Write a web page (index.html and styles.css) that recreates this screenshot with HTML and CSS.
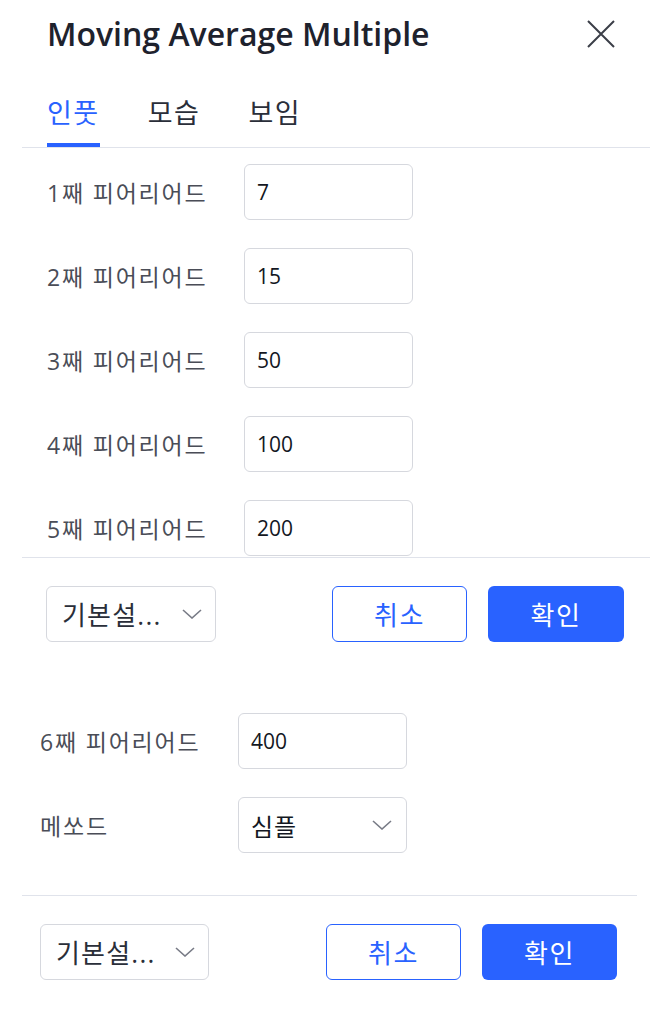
FILE: index.html
```html
<!DOCTYPE html>
<html lang="ko">
<head>
<meta charset="utf-8">
<title>Moving Average Multiple</title>
<link rel="stylesheet" href="styles.css">
</head>
<body>
<section class="panel panel-a">
  <header class="head">
    <h1 class="title">Moving Average Multiple</h1>
    <button class="close" aria-label="닫기">
      <svg width="28" height="28" viewBox="0 0 28 28"><path d="M1 1 L27 27 M27 1 L1 27" stroke="#3b3e48" stroke-width="2" fill="none"/></svg>
    </button>
  </header>
  <nav class="tabs">
    <span class="tab active">인풋</span>
    <span class="tab">모습</span>
    <span class="tab">보임</span>
  </nav>
  <div class="rows rows-a">
    <div class="row"><span class="label">1째 피어리어드</span><span class="field">7</span></div>
    <div class="row"><span class="label">2째 피어리어드</span><span class="field">15</span></div>
    <div class="row"><span class="label">3째 피어리어드</span><span class="field">50</span></div>
    <div class="row"><span class="label">4째 피어리어드</span><span class="field">100</span></div>
    <div class="row"><span class="label">5째 피어리어드</span><span class="field">200</span></div>
  </div>
  <footer class="foot">
    <span class="preset">기본설...<svg class="chev" width="20" height="10" viewBox="0 0 20 10"><path d="M1 1 L10 9 L19 1" stroke="#787b86" stroke-width="1.6" fill="none"/></svg></span>
    <span class="spacer"></span>
    <button class="btn cancel">취소</button>
    <button class="btn ok">확인</button>
  </footer>
</section>
<section class="panel panel-b">
  <div class="rows rows-b">
    <div class="row"><span class="label">6째 피어리어드</span><span class="field">400</span></div>
    <div class="row"><span class="label">메쏘드</span><span class="field select">심플<svg class="chev" width="20" height="10" viewBox="0 0 20 10"><path d="M1 1 L10 9 L19 1" stroke="#787b86" stroke-width="1.6" fill="none"/></svg></span></div>
  </div>
  <footer class="foot">
    <span class="preset">기본설...<svg class="chev" width="20" height="10" viewBox="0 0 20 10"><path d="M1 1 L10 9 L19 1" stroke="#787b86" stroke-width="1.6" fill="none"/></svg></span>
    <span class="spacer"></span>
    <button class="btn cancel">취소</button>
    <button class="btn ok">확인</button>
  </footer>
</section>
</body>
</html>
```
FILE: styles.css
```css
* { box-sizing: border-box; }
html, body { margin: 0; padding: 0; background: #ffffff; }
body {
  font-family: "Open Sans", "Noto Sans CJK KR", sans-serif;
  color: #131722;
}
.panel { margin-left: 22px; }
.panel-a { width: 628px; }
.panel-b { width: 615px; }

.head {
  display: flex;
  align-items: flex-start;
  justify-content: space-between;
  padding: 14px 35px 0 25px;
  height: 54px;
}
.title {
  margin: 0;
  font-size: 32px;
  line-height: 40px;
  font-weight: 600;
  color: #1e222d;
}
.close {
  border: 0;
  background: none;
  padding: 0;
  margin-top: 6px;
  width: 28px;
  height: 28px;
  display: block;
}
.close svg { display: block; }

.tabs {
  display: flex;
  gap: 48px;
  padding: 41px 0 0 25px;
  border-bottom: 1px solid #e0e3eb;
}
.tab {
  font-size: 27px;
  line-height: 36px;
  letter-spacing: 1.5px;
  padding-bottom: 12px;
  border-bottom: 4px solid transparent;
  color: #2a2e39;
}
.tab.active { color: #2962ff; border-bottom-color: #2962ff; }

.rows {
  display: flex;
  flex-direction: column;
  gap: 28px;
  border-bottom: 1px solid #e0e3eb;
}
.rows-a {
  padding: 16px 0 0 25px;
  height: 410px;
  overflow: hidden;
}
.rows-b {
  padding: 43px 0 42px 18px;
}
.row {
  display: flex;
  align-items: center;
  flex: none;
}
.label {
  font-size: 23px;
  letter-spacing: 1.8px;
  color: #4a4d57;
  width: 197px;
  flex: none;
}
.rows-b .label { width: 198px; }
.field {
  width: 169px;
  height: 56px;
  border: 1px solid #d6d8de;
  border-radius: 6px;
  padding: 0 12px;
  display: flex;
  align-items: center;
  font-size: 21px;
  color: #131722;
}
.field.select {
  justify-content: space-between;
  font-size: 24px;
  letter-spacing: 1px;
  padding: 0 14px 0 12px;
}

.foot {
  display: flex;
  align-items: center;
  padding: 28px 26px 28px 24px;
}
.panel-b .foot { padding: 28px 20px 28px 18px; }
.preset {
  width: 170px;
  height: 56px;
  border: 1px solid #d6d8de;
  border-radius: 6px;
  display: flex;
  align-items: center;
  justify-content: space-between;
  padding: 0 13px 0 15px;
  font-size: 26px;
  letter-spacing: 1.2px;
  color: #2a2e39;
}
.panel-b .preset { width: 169px; }
.chev { display: block; }
.spacer { flex: 1; }
.btn {
  height: 56px;
  border-radius: 6px;
  font-family: "Open Sans", "Noto Sans CJK KR", sans-serif;
  font-size: 26px;
  letter-spacing: 1.5px;
  padding: 0;
}
.cancel {
  width: 135px;
  border: 1.5px solid #2962ff;
  background: #ffffff;
  color: #2962ff;
  margin-right: 21px;
}
.ok {
  width: 136px;
  border: 0;
  background: #2962ff;
  color: #ffffff;
}
.panel-b .ok { width: 135px; }
```
